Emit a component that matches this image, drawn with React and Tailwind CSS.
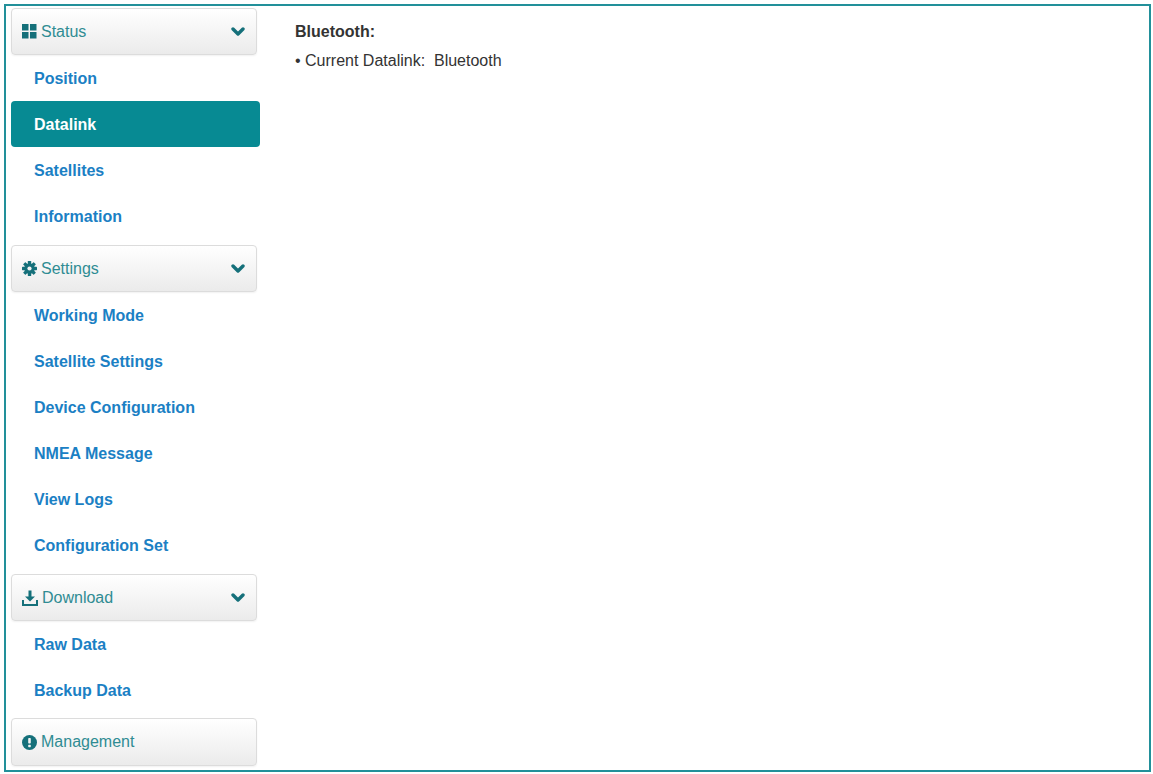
import React from "react";

const font = { fontFamily: '"Liberation Sans", Arial, sans-serif' };

function Chevron() {
  return (
    <svg width="14" height="10" viewBox="0 0 14 10" className="text-[#15707a]">
      <polyline points="2,2 7,7 12,2" fill="none" stroke="currentColor" strokeWidth="3.4" strokeLinecap="round" strokeLinejoin="round" />
    </svg>
  );
}

function GridIcon() {
  return (
    <svg width="15" height="15" viewBox="0 0 15 15" className="text-[#15707a]">
      <rect x="0" y="0" width="6.5" height="6.5" fill="currentColor" />
      <rect x="8" y="0" width="6.5" height="6.5" fill="currentColor" />
      <rect x="0" y="8" width="6.5" height="6.5" fill="currentColor" />
      <rect x="8" y="8" width="6.5" height="6.5" fill="currentColor" />
    </svg>
  );
}

function CogIcon() {
  const teeth = [];
  for (let i = 0; i < 4; i++) {
    teeth.push(
      <rect key={i} x="5.8" y="0" width="3.4" height="15" rx="0.6" fill="currentColor" transform={`rotate(${i * 45} 7.5 7.5)`} />
    );
  }
  return (
    <svg width="15" height="15" viewBox="0 0 15 15" className="text-[#15707a]">
      {teeth}
      <circle cx="7.5" cy="7.5" r="5.2" fill="currentColor" />
      <circle cx="7.5" cy="7.5" r="2.1" fill="#f1f1f1" />
    </svg>
  );
}

function DownloadIcon() {
  return (
    <svg width="16" height="16" viewBox="0 0 16 16" className="text-[#15707a]">
      <rect x="6.5" y="0.5" width="3" height="7" fill="currentColor" />
      <polygon points="3,6.5 13,6.5 8,11.5" fill="currentColor" />
      <path d="M1 10 V15 H15 V10" fill="none" stroke="currentColor" strokeWidth="2" />
    </svg>
  );
}

function AlertIcon() {
  return (
    <svg width="15" height="15" viewBox="0 0 15 15" className="text-[#15707a]">
      <circle cx="7.5" cy="7.5" r="7.5" fill="currentColor" />
      <rect x="6.2" y="3" width="2.6" height="5.5" rx="0.8" fill="#f3f3f3" />
      <rect x="6.2" y="9.8" width="2.6" height="2.4" rx="0.6" fill="#f3f3f3" />
    </svg>
  );
}

function Header({ icon, label, chevron = true, h = "h-[47px]" }) {
  return (
    <div className={`${h} w-[246px] flex items-center justify-between rounded-[4px] border border-[#dcdcdc] bg-gradient-to-b from-white to-[#ebebeb] shadow-[0_1px_2px_rgba(0,0,0,0.06)] pl-[10px] pr-[11px]`}>
      <div className="flex items-center gap-[4px] text-[16px] text-[#2f8c93]">
        <span className="flex items-center">{icon}</span>
        <span>{label}</span>
      </div>
      {chevron && <Chevron />}
    </div>
  );
}

function Item({ label, active }) {
  if (active) {
    return (
      <div className="h-[46px] w-[249px] flex items-center rounded-[4px] bg-[#078a93] pl-[23px] pt-[2px] text-[16px] font-bold text-white">
        {label}
      </div>
    );
  }
  return (
    <div className="h-[46px] flex items-center pl-[23px] pt-[2px] text-[16px] font-bold text-[#1b80c4]">
      {label}
    </div>
  );
}

export default function App() {
  return (
    <div className="w-[1153px] h-[774px] bg-white p-[4px] pr-[2px]" style={font}>
      <div className="h-[768px] w-[1147px] border-2 border-[#22909a] flex">
        <div className="w-[254px] pl-[5px] pt-[2px] flex flex-col">
          <Header icon={<GridIcon />} label="Status" />
          <Item label="Position" />
          <Item label="Datalink" active />
          <Item label="Satellites" />
          <Item label="Information" />
          <div className="h-[6px]" />
          <Header icon={<CogIcon />} label="Settings" />
          <Item label="Working Mode" />
          <Item label="Satellite Settings" />
          <Item label="Device Configuration" />
          <Item label="NMEA Message" />
          <Item label="View Logs" />
          <Item label="Configuration Set" />
          <div className="h-[6px]" />
          <Header icon={<DownloadIcon />} label="Download" />
          <Item label="Raw Data" />
          <Item label="Backup Data" />
          <div className="h-[5px]" />
          <Header icon={<AlertIcon />} label="Management" chevron={false} h="h-[48px]" />
        </div>
        <div className="pl-[35px] pt-[17px] text-[16px] text-[#333333]">
          <div className="font-bold leading-[18px]">Bluetooth:</div>
          <div className="mt-[11px] leading-[18px]">• Current Datalink:&nbsp; Bluetooth</div>
        </div>
      </div>
    </div>
  );
}
